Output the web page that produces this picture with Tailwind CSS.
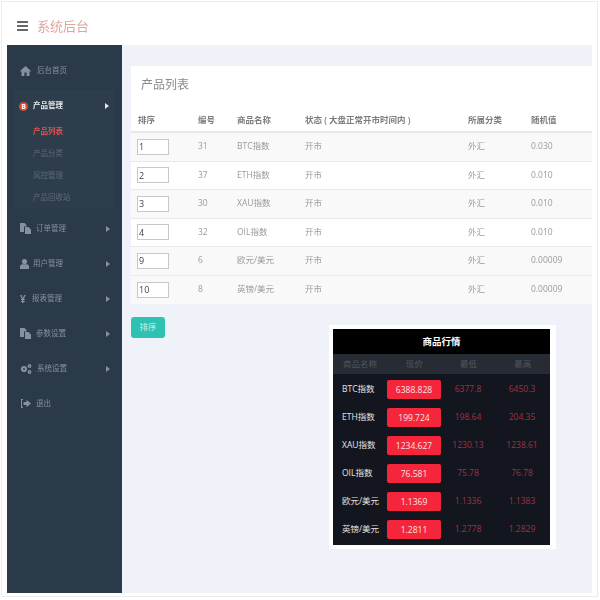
<!DOCTYPE html>
<html lang="zh-CN">
<head>
  <meta charset="UTF-8" />
  <title>系统后台</title>
  <script src="https://cdn.jsdelivr.net/npm/@tailwindcss/browser@4"></script>
</head>
<body class="bg-white w-[600px] h-[600px] overflow-hidden font-['Open_Sans','Noto_Sans_CJK_SC',sans-serif]">
  <div class="relative w-[600px] h-[600px] p-px blur-[0.4px]">
    <div class="w-[597px] h-[596px] border border-[#ececec] px-[5px] pt-[5px] flex flex-col">
      <!-- top bar -->
      <header class="h-[38px] flex items-center gap-[9px] pl-[10px] shrink-0">
        <svg width="11" height="10" viewBox="0 0 11 10" class="text-[#666]" fill="currentColor">
          <rect width="11" height="2" rx="0.5" />
          <rect y="4" width="11" height="2" rx="0.5" />
          <rect y="8" width="11" height="2" rx="0.5" />
        </svg>
        <span class="text-[13px] leading-none text-[#dba69e]">系统后台</span>
      </header>

      <div class="flex h-[548px]">
        <!-- sidebar -->
        <aside class="w-[115px] shrink-0 bg-[#2b3a49] text-[7.5px] text-[#87919b] pt-[8px]">
          <a class="h-[35px] flex items-center gap-[6px] pl-[13px]">
            <svg width="11" height="10" viewBox="0 0 11 10" fill="currentColor"><path d="M5.500 0 11 5l-.7.7-.8-.7v5H6.600V6.600H4.400V10H1.500V5l-.8.7L0 5z" /></svg>
            <span>后台首页</span>
          </a>
          <div class="mx-[7px] h-[118px] bg-[#2e3d4c] mt-[2px]">
            <a class="h-[32px] flex items-center pl-[5px] pr-[5px] text-[#e4e7ea] font-semibold">
              <span class="w-[9px] h-[9px] rounded-full bg-[#e0472f] text-white text-[7px] leading-[9px] text-center font-bold mr-[3px]">B</span>
              <span class="ml-[2px]">产品管理</span>
              <svg width="4" height="6" viewBox="0 0 4 6" fill="currentColor" class="ml-auto mr-[1px]"><path d="M0 0l4 3-4 3z" /></svg>
            </a>
            <ul class="pl-[19px] text-[#5d6b78] -mt-[2px]">
              <li class="h-[22px] leading-[22px] text-[#e2524f] font-semibold">产品列表</li>
              <li class="h-[22px] leading-[22px]">产品分类</li>
              <li class="h-[22px] leading-[22px]">风控管理</li>
              <li class="h-[22px] leading-[22px]">产品回收站</li>
            </ul>
          </div>
          <a class="h-[35px] mt-[3px] flex items-center pl-[13px] pr-[12px]">
            <svg width="11" height="11" viewBox="0 0 11 11" fill="currentColor" class="mr-[5px]"><path d="M0 0h4.500l2 2v1.500H4V9H0z" /><path d="M5 4h3.500L11 6.500V11H5z" /></svg>
            <span>订单管理</span>
            <svg width="4" height="6" viewBox="0 0 4 6" fill="currentColor" class="ml-auto"><path d="M0 0l4 3-4 3z" /></svg>
          </a>
          <a class="h-[35px] flex items-center pl-[13px] pr-[12px]">
            <svg width="9" height="10" viewBox="0 0 9 10" fill="currentColor" class="mr-[4px]"><circle cx="4.500" cy="2.600" r="2.600" /><path d="M0 10V7.500C0 6 1.300 5.200 2.500 5.200h4C7.700 5.200 9 6 9 7.500V10z" /></svg>
            <span>用户管理</span>
            <svg width="4" height="6" viewBox="0 0 4 6" fill="currentColor" class="ml-auto"><path d="M0 0l4 3-4 3z" /></svg>
          </a>
          <a class="h-[35px] flex items-center pl-[13px] pr-[12px]">
            <span class="w-[12px] font-bold text-[10px] leading-none">¥</span>
            <span>报表管理</span>
            <svg width="4" height="6" viewBox="0 0 4 6" fill="currentColor" class="ml-auto"><path d="M0 0l4 3-4 3z" /></svg>
          </a>
          <a class="h-[35px] flex items-center pl-[13px] pr-[12px]">
            <svg width="11" height="11" viewBox="0 0 11 11" fill="currentColor" class="mr-[5px]"><path d="M0 0h4.500l2 2v1.500H4V9H0z" /><path d="M5 4h3.500L11 6.500V11H5z" /></svg>
            <span>参数设置</span>
            <svg width="4" height="6" viewBox="0 0 4 6" fill="currentColor" class="ml-auto"><path d="M0 0l4 3-4 3z" /></svg>
          </a>
          <a class="h-[35px] flex items-center pl-[13px] pr-[12px]">
            <svg width="12" height="10" viewBox="0 0 12 10" class="mr-[5px]" fill="none" stroke="currentColor"><circle cx="4" cy="5" r="2" stroke-width="2.200" /><circle cx="9.500" cy="2" r="1.200" stroke-width="1.400" /><circle cx="9.500" cy="8" r="1.200" stroke-width="1.400" /></svg>
            <span>系统设置</span>
            <svg width="4" height="6" viewBox="0 0 4 6" fill="currentColor" class="ml-auto"><path d="M0 0l4 3-4 3z" /></svg>
          </a>
          <a class="h-[35px] flex items-center pl-[13px] pr-[12px]">
            <svg width="11" height="9" viewBox="0 0 11 9" fill="currentColor" class="mr-[5px]"><path d="M3 0H1v9h2V8H2V1h1z" /><path d="M3.500 3H6.500V.8L11 4.500 6.500 8.200V6H3.500z" /></svg>
            <span>退出</span>
          </a>
        </aside>

        <!-- content -->
        <main class="flex-1 min-w-0 bg-[#eff3f9] pl-[9px] pt-[21px]">
          <section class="bg-white overflow-hidden text-[8.500px] text-[#9a9a9a]">
            <h2 class="h-[43px] flex items-center pl-[10px] pb-[6px] text-[12px] text-[#8a8a8a] leading-none">产品列表</h2>
            <div class="grid grid-cols-[60px_39px_68px_163px_63px_61px_20px] pl-[7px] h-[24px] items-center font-semibold text-[#7d7d7d] border-b-2 border-[#e8e8e8] whitespace-pre">
              <span>排序</span><span>编号</span><span>商品名称</span><span>状态 ( 大盘正常开市时间内 )</span><span>所属分类</span><span>随机值</span><span>操作</span>
            </div>
            <div class="grid grid-cols-[60px_39px_68px_163px_63px_61px_20px] pl-[7px] h-[28.500px] items-center bg-[#f9f9f9] border-b border-[#e9e9e9]">
              <input value="1" class="w-[32px] h-[16px] -ml-px bg-white border border-[#c8c8c8] pl-px text-[9px] text-[#444]" /><span>31</span><span>BTC指数</span><span>开市</span><span>外汇</span><span>0.030</span><span>0</span>
            </div>
            <div class="grid grid-cols-[60px_39px_68px_163px_63px_61px_20px] pl-[7px] h-[28.500px] items-center border-b border-[#e9e9e9]">
              <input value="2" class="w-[32px] h-[16px] -ml-px bg-white border border-[#c8c8c8] pl-px text-[9px] text-[#444]" /><span>37</span><span>ETH指数</span><span>开市</span><span>外汇</span><span>0.010</span><span>0</span>
            </div>
            <div class="grid grid-cols-[60px_39px_68px_163px_63px_61px_20px] pl-[7px] h-[28.500px] items-center bg-[#f9f9f9] border-b border-[#e9e9e9]">
              <input value="3" class="w-[32px] h-[16px] -ml-px bg-white border border-[#c8c8c8] pl-px text-[9px] text-[#444]" /><span>30</span><span>XAU指数</span><span>开市</span><span>外汇</span><span>0.010</span><span>0</span>
            </div>
            <div class="grid grid-cols-[60px_39px_68px_163px_63px_61px_20px] pl-[7px] h-[28.500px] items-center border-b border-[#e9e9e9]">
              <input value="4" class="w-[32px] h-[16px] -ml-px bg-white border border-[#c8c8c8] pl-px text-[9px] text-[#444]" /><span>32</span><span>OIL指数</span><span>开市</span><span>外汇</span><span>0.010</span><span>0</span>
            </div>
            <div class="grid grid-cols-[60px_39px_68px_163px_63px_61px_20px] pl-[7px] h-[28.500px] items-center bg-[#f9f9f9] border-b border-[#e9e9e9]">
              <input value="9" class="w-[32px] h-[16px] -ml-px bg-white border border-[#c8c8c8] pl-px text-[9px] text-[#444]" /><span>6</span><span>欧元/美元</span><span>开市</span><span>外汇</span><span>0.00009</span><span>0</span>
            </div>
            <div class="grid grid-cols-[60px_39px_68px_163px_63px_61px_20px] pl-[7px] h-[28.500px] items-center bg-[#f9f9f9]">
              <input value="10" class="w-[32px] h-[16px] -ml-px bg-white border border-[#c8c8c8] pl-px text-[9px] text-[#444]" /><span>8</span><span>英镑/美元</span><span>开市</span><span>外汇</span><span>0.00009</span><span>0</span>
            </div>
          </section>
          <button class="mt-[13px] w-[34px] h-[21px] rounded-[3px] bg-[#2fc1b1] text-[8.500px] text-[#c9f2ec]">排序</button>
        </main>
      </div>
    </div>

    <!-- market panel pasted over the page -->
    <div class="absolute left-[329px] top-[325px] w-[227px] h-[224px] bg-white p-[4px]">
      <div class="w-[217px] h-[216px] bg-[#13161e] text-[8.500px]">
        <div class="h-[25px] bg-black text-white font-bold text-center leading-[25px] text-[9.500px]">商品行情</div>
        <div class="grid grid-cols-4 h-[20px] mb-px items-center text-center bg-[#262b34] text-[#525861]">
          <span>商品名称</span><span>现价</span><span>最低</span><span>最高</span>
        </div>
        <div class="grid grid-cols-[54px_54px_54px_54px] h-[28px] items-center text-center text-[#a3303f]">
          <span class="pl-[9px] text-left text-[#e4e4e4] whitespace-nowrap">BTC指数</span><span class="h-[19px] leading-[19px] rounded-[2px] bg-[#f5263c] text-[#fde3e5]">6388.828</span><span>6377.8</span><span>6450.3</span>
        </div>
        <div class="grid grid-cols-[54px_54px_54px_54px] h-[28px] items-center text-center text-[#a3303f]">
          <span class="pl-[9px] text-left text-[#e4e4e4] whitespace-nowrap">ETH指数</span><span class="h-[19px] leading-[19px] rounded-[2px] bg-[#f5263c] text-[#fde3e5]">199.724</span><span>198.64</span><span>204.35</span>
        </div>
        <div class="grid grid-cols-[54px_54px_54px_54px] h-[28px] items-center text-center text-[#a3303f]">
          <span class="pl-[9px] text-left text-[#e4e4e4] whitespace-nowrap">XAU指数</span><span class="h-[19px] leading-[19px] rounded-[2px] bg-[#f5263c] text-[#fde3e5]">1234.627</span><span>1230.13</span><span>1238.61</span>
        </div>
        <div class="grid grid-cols-[54px_54px_54px_54px] h-[28px] items-center text-center text-[#a3303f]">
          <span class="pl-[9px] text-left text-[#e4e4e4] whitespace-nowrap">OIL指数</span><span class="h-[19px] leading-[19px] rounded-[2px] bg-[#f5263c] text-[#fde3e5]">76.581</span><span>75.78</span><span>76.78</span>
        </div>
        <div class="grid grid-cols-[54px_54px_54px_54px] h-[28px] items-center text-center text-[#a3303f]">
          <span class="pl-[9px] text-left text-[#e4e4e4] whitespace-nowrap">欧元/美元</span><span class="h-[19px] leading-[19px] rounded-[2px] bg-[#f5263c] text-[#fde3e5]">1.1369</span><span>1.1336</span><span>1.1383</span>
        </div>
        <div class="grid grid-cols-[54px_54px_54px_54px] h-[28px] items-center text-center text-[#a3303f]">
          <span class="pl-[9px] text-left text-[#e4e4e4] whitespace-nowrap">英镑/美元</span><span class="h-[19px] leading-[19px] rounded-[2px] bg-[#f5263c] text-[#fde3e5]">1.2811</span><span>1.2778</span><span>1.2829</span>
        </div>
      </div>
    </div>
  </div>
</body>
</html>
